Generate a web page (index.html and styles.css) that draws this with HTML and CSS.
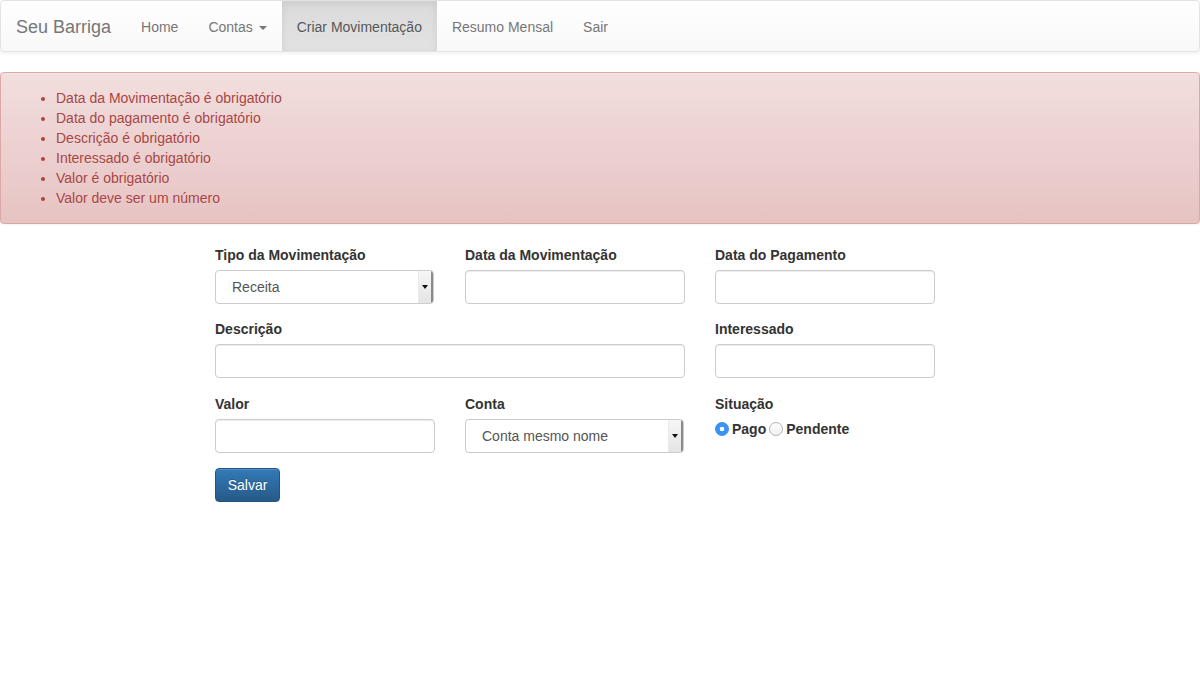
FILE: index.html
```html
<!DOCTYPE html>
<html lang="pt-BR">
<head>
<meta charset="utf-8">
<title>Seu Barriga - Criar Movimentação</title>
<link rel="stylesheet" href="styles.css">
</head>
<body>
<nav class="navbar">
  <a class="brand" href="#">Seu Barriga</a>
  <ul class="nav">
    <li><a href="#">Home</a></li>
    <li><a href="#">Contas <span class="caret"></span></a></li>
    <li class="active"><a href="#">Criar Movimentação</a></li>
    <li><a href="#">Resumo Mensal</a></li>
    <li><a href="#">Sair</a></li>
  </ul>
</nav>

<div class="alert">
  <ul>
    <li>Data da Movimentação é obrigatório</li>
    <li>Data do pagamento é obrigatório</li>
    <li>Descrição é obrigatório</li>
    <li>Interessado é obrigatório</li>
    <li>Valor é obrigatório</li>
    <li>Valor deve ser um número</li>
  </ul>
</div>

<form class="form">
  <div class="grid">
    <div class="group">
      <label>Tipo da Movimentação</label>
      <div class="select">
        <span class="select-text">Receita</span>
        <span class="select-arrow"><span class="tri"></span></span>
      </div>
    </div>
    <div class="group">
      <label>Data da Movimentação</label>
      <input class="control" type="text">
    </div>
    <div class="group">
      <label>Data do Pagamento</label>
      <input class="control" type="text">
    </div>

    <div class="group row2 span2">
      <label>Descrição</label>
      <input class="control" type="text">
    </div>
    <div class="group row2">
      <label>Interessado</label>
      <input class="control" type="text">
    </div>

    <div class="group">
      <label>Valor</label>
      <input class="control" type="text">
    </div>
    <div class="group">
      <label>Conta</label>
      <div class="select">
        <span class="select-text">Conta mesmo nome</span>
        <span class="select-arrow"><span class="tri"></span></span>
      </div>
    </div>
    <div class="group">
      <label>Situação</label>
      <div class="radios">
        <span class="radio checked"></span><span class="rlabel">Pago</span>
        <span class="radio"></span><span class="rlabel">Pendente</span>
      </div>
    </div>
  </div>
  <button class="btn" type="button">Salvar</button>
</form>
</body>
</html>
```

FILE: styles.css
```css
* { box-sizing: border-box; }

html, body {
  margin: 0;
  padding: 0;
  background: #fff;
}

body {
  font-family: "Liberation Sans", Arial, Helvetica, sans-serif;
  font-size: 14px;
  line-height: 20px;
  color: #333;
}

/* Navbar */
.navbar {
  display: flex;
  align-items: stretch;
  height: 52px;
  margin-bottom: 20px;
  border: 1px solid #e3e3e3;
  border-radius: 4px;
  background: linear-gradient(to bottom, #ffffff 0%, #f8f8f8 100%);
  box-shadow: inset 0 1px 0 rgba(255,255,255,.15), 0 1px 5px rgba(0,0,0,.075);
}

.brand {
  display: block;
  padding: 16px 15px 14px;
  font-size: 18px;
  line-height: 20px;
  color: #777;
  text-decoration: none;
  text-shadow: 0 1px 0 rgba(255,255,255,.25);
}

.nav {
  display: flex;
  list-style: none;
  margin: 0;
  padding: 0;
}

.nav li a {
  display: block;
  height: 50px;
  padding: 16px 15px 14px;
  color: #777;
  text-decoration: none;
  text-shadow: 0 1px 0 rgba(255,255,255,.25);
}

.nav li.active a {
  color: #555;
  background: linear-gradient(to bottom, #dbdbdb 0%, #e2e2e2 100%);
  box-shadow: inset 0 3px 9px rgba(0,0,0,.075);
}

.caret {
  display: inline-block;
  width: 0;
  height: 0;
  margin-left: 2px;
  vertical-align: middle;
  border-top: 4px solid #777;
  border-left: 4px solid transparent;
  border-right: 4px solid transparent;
}

/* Alert */
.alert {
  margin-bottom: 20px;
  padding: 15px;
  border: 1px solid #dca7a7;
  border-radius: 4px;
  color: #a94442;
  background: linear-gradient(to bottom, #f2dede 0%, #e7c3c3 100%);
  box-shadow: inset 0 1px 0 rgba(255,255,255,.25), 0 1px 2px rgba(0,0,0,.05);
  text-shadow: 0 1px 0 rgba(255,255,255,.2);
}

.alert ul {
  margin: 0;
  padding-left: 40px;
}

/* Form */
.form {
  margin-top: 21px;
  margin-left: 215px;
  width: 720px;
}

.grid {
  display: grid;
  grid-template-columns: 220px 220px 220px;
  column-gap: 30px;
}

.group {
  margin-bottom: 15px;
}

.group.row2 {
  margin-bottom: 16px;
}

.span2 {
  grid-column: span 2;
}

label {
  display: block;
  margin-bottom: 5px;
  font-weight: bold;
}

.control {
  display: block;
  width: 100%;
  height: 34px;
  padding: 6px 12px;
  font-family: inherit;
  font-size: 14px;
  color: #555;
  background: #fff;
  border: 1px solid #ccc;
  border-radius: 4px;
  box-shadow: inset 0 1px 1px rgba(0,0,0,.075);
}

.select {
  display: flex;
  align-items: stretch;
  width: 219px;
  height: 34px;
  border: 1px solid #ccc;
  border-radius: 4px;
  background: #fff;
  overflow: hidden;
  color: #555;
}

.select-text {
  flex: 1;
  padding: 6px 0 6px 16px;
}

.select-arrow {
  display: flex;
  align-items: center;
  justify-content: center;
  width: 15px;
  background: linear-gradient(to bottom, #f6f6f6 0%, #e4e4e4 100%);
  border-left: 1px solid #eaeaea;
  box-shadow: inset -2px 0 0 #8a8a8a;
}

.tri {
  display: block;
  width: 0;
  height: 0;
  margin-right: 2px;
  border-top: 4px solid #111;
  border-left: 3px solid transparent;
  border-right: 3px solid transparent;
}

.radios {
  display: flex;
  align-items: center;
  font-weight: bold;
  height: 20px;
}

.radio {
  display: inline-block;
  width: 14px;
  height: 14px;
  border-radius: 50%;
  border: 1px solid #b4b4b4;
  background: linear-gradient(to bottom, #ffffff, #f0f0f0);
  margin-right: 3px;
}

.radio.checked {
  border-color: #3a8ef0;
  background: radial-gradient(circle, #fff 0, #fff 2px, #3b91f5 2.6px);
}

.rlabel {
  margin-right: 3px;
}

.btn {
  display: block;
  width: 65px;
  height: 34px;
  padding: 6px 0;
  font-family: inherit;
  font-size: 14px;
  line-height: 20px;
  text-align: center;
  color: #fff;
  background: linear-gradient(to bottom, #337ab7 0%, #265a88 100%);
  border: 1px solid #245580;
  border-radius: 4px;
  text-shadow: 0 -1px 0 rgba(0,0,0,.2);
  box-shadow: inset 0 1px 0 rgba(255,255,255,.15), 0 1px 1px rgba(0,0,0,.075);
  cursor: pointer;
}
```
